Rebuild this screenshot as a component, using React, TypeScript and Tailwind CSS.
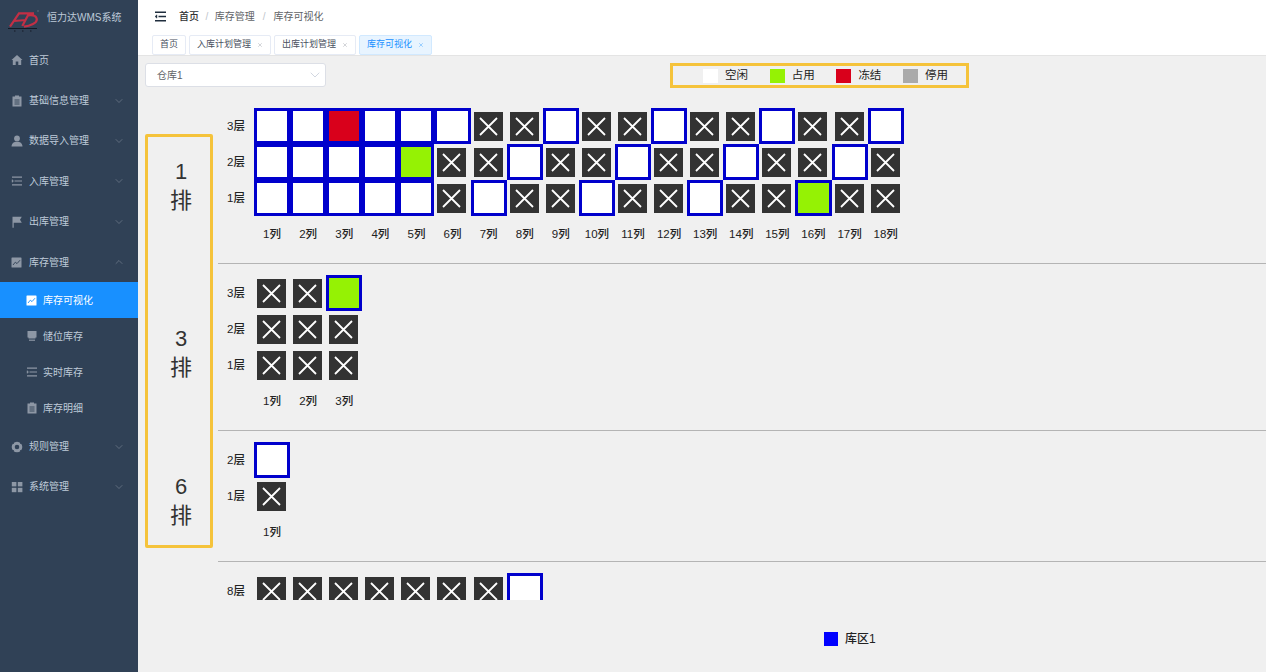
// App.tsx
import { ChevronDown, ChevronUp, X } from "lucide-react";
import type { ReactNode } from "react";

const ICON_COLOR = "#8d97a5";

function HomeIcon() {
    return (
        <svg width="12" height="12" viewBox="0 0 12 12" fill={ICON_COLOR}>
            <path d="M6 1 L11.5 6 L10.2 6 L10.2 11 L7.3 11 L7.3 7.5 L4.7 7.5 L4.7 11 L1.8 11 L1.8 6 L0.5 6 Z" />
        </svg>
    );
}

function ClipboardIcon() {
    return (
        <svg width="12" height="12" viewBox="0 0 12 12">
            <path d="M1.5 1.5 H4 V0.5 H8 V1.5 H10.5 V11.5 H1.5 Z" fill={ICON_COLOR} />
            <path d="M3.5 5 H8.5 M3.5 7 H8.5 M3.5 9 H8.5" stroke="#304156" strokeWidth="0.9" />
        </svg>
    );
}

function UserIcon() {
    return (
        <svg width="12" height="12" viewBox="0 0 12 12" fill={ICON_COLOR}>
            <circle cx="6" cy="3.4" r="2.9" />
            <path d="M0.5 11.5 C0.8 8 3 6.8 6 6.8 C9 6.8 11.2 8 11.5 11.5 Z" />
        </svg>
    );
}

function ListIcon() {
    return (
        <svg width="12" height="12" viewBox="0 0 12 12" fill="none" stroke={ICON_COLOR} strokeWidth="1.2">
            <path d="M1 2.2 H11 M3.5 6 H11 M1 9.8 H11" />
            <path d="M1 4.6 L2.6 6 L1 7.4 Z" fill={ICON_COLOR} strokeWidth="0.4" />
        </svg>
    );
}

function FlagIcon() {
    return (
        <svg width="12" height="12" viewBox="0 0 12 12" fill={ICON_COLOR}>
            <path d="M1.5 0.8 H10.8 L9 3.8 L10.8 6.8 H2.7 V11.8 H1.5 Z" />
        </svg>
    );
}

function ChartIcon({ color = ICON_COLOR, line = "#304156" }: { color?: string; line?: string }) {
    return (
        <svg width="11" height="11" viewBox="0 0 11 11">
            <rect x="0.5" y="0.5" width="10" height="10" rx="0.6" fill={color} />
            <path d="M2 8 L4.3 5.2 L6 6.6 L9 3.2" fill="none" stroke={line} strokeWidth="0.9" />
        </svg>
    );
}

function PrinterIcon() {
    return (
        <svg width="12" height="12" viewBox="0 0 12 12" fill={ICON_COLOR}>
            <path d="M1.5 1 H10.5 V7.5 H9.5 V8.5 H2.5 V7.5 H1.5 Z" />
            <rect x="3" y="9.6" width="6" height="1.2" />
        </svg>
    );
}

function GearIcon() {
    return (
        <svg width="12" height="12" viewBox="0 0 12 12" fill="none">
            <circle cx="6" cy="6" r="3.8" stroke={ICON_COLOR} strokeWidth="3" />
            <path d="M1.6 1.6 L2.8 2.8 M10.4 1.6 L9.2 2.8 M1.6 10.4 L2.8 9.2 M10.4 10.4 L9.2 9.2" stroke="#304156" strokeWidth="1" />
        </svg>
    );
}

function GridIcon() {
    return (
        <svg width="12" height="12" viewBox="0 0 12 12" fill={ICON_COLOR}>
            <rect x="0.8" y="1" width="4.6" height="4.4" />
            <rect x="6.8" y="1" width="4.6" height="4.4" />
            <rect x="0.8" y="6.8" width="4.6" height="4.4" />
            <rect x="6.8" y="6.8" width="4.6" height="4.4" />
        </svg>
    );
}

function Logo() {
    return (
        <svg width="32" height="24" viewBox="0 0 32 24" fill="none" className="shrink-0">
            <path d="M3 17.7 L12 4.3 H27 M7 12 L19 11 M15.3 17 L21 6.3 C31 5 32 12 26 15 C23 16.6 20 17.4 17 17.7" stroke="#c22f45" strokeWidth="2.2" />
            <path d="M1 19.5 H30" stroke="#141a26" strokeWidth="1" />
            <path d="M7 22 H8.5 M15 22 H16.5 M23 22 H24.5" stroke="#141a26" strokeWidth="1" />
            <path d="M31 1 V3" stroke="#6b7380" strokeWidth="0.8" />
        </svg>
    );
}

function MenuItem({ icon, label, open }: { icon: ReactNode; label: string; open?: boolean }) {
    return (
        <div className="h-[40.4px] flex items-center pl-[11px] pr-[13px] text-[10px] text-[#bfcbd9]">
            <span className="w-[18px] flex items-center shrink-0">{icon}</span>
            <span className="flex-1">{label}</span>
            {open === true && <ChevronUp size={12} strokeWidth={1} color="#8d97a5" />}
            {open === false && <ChevronDown size={12} strokeWidth={1} color="#8d97a5" />}
        </div>
    );
}

function SubItem({ icon, label, active }: { icon: ReactNode; label: string; active?: boolean }) {
    return (
        <div className={`h-9 flex items-center pl-[26px] text-[10px] ${active ? "bg-[#1890ff] text-white" : "text-[#bfcbd9]"}`}>
            <span className="w-[17px] flex items-center shrink-0">{icon}</span>
            <span>{label}</span>
        </div>
    );
}

function Sidebar() {
    return (
        <aside className="w-[138px] shrink-0 h-full bg-[#304156]">
            <div className="h-10 flex items-start pl-[7px] pt-[9px] gap-[8px]">
                <Logo />
                <span className="text-[10px] text-[#bfcbd9] mt-[1px] whitespace-nowrap">恒力达WMS系统</span>
            </div>
            <MenuItem icon={<HomeIcon />} label="首页" />
            <MenuItem icon={<ClipboardIcon />} label="基础信息管理" open={false} />
            <MenuItem icon={<UserIcon />} label="数据导入管理" open={false} />
            <MenuItem icon={<ListIcon />} label="入库管理" open={false} />
            <MenuItem icon={<FlagIcon />} label="出库管理" open={false} />
            <MenuItem icon={<ChartIcon />} label="库存管理" open={true} />
            <SubItem icon={<ChartIcon color="#ffffff" line="#1890ff" />} label="库存可视化" active />
            <SubItem icon={<PrinterIcon />} label="储位库存" />
            <SubItem icon={<ListIcon />} label="实时库存" />
            <SubItem icon={<ClipboardIcon />} label="库存明细" />
            <MenuItem icon={<GearIcon />} label="规则管理" open={false} />
            <MenuItem icon={<GridIcon />} label="系统管理" open={false} />
        </aside>
    );
}

function Tab({ label, active, closable = true }: { label: string; active?: boolean; closable?: boolean }) {
    return (
        <div
            className={`h-[20px] flex items-center px-[7px] gap-[6px] border rounded-[2px] text-[9px] whitespace-nowrap ${
                active ? "bg-[#e8f4ff] border-[#d1e9ff] text-[#1890ff]" : "bg-white border-[#e6ebf5] text-[#495060]"
            }`}
        >
            <span>{label}</span>
            {closable && <X size={6} strokeWidth={1.5} color={active ? "#1890ff" : "#8a8f99"} />}
        </div>
    );
}

function TopBar() {
    return (
        <header className="shrink-0 bg-white">
            <div className="h-[32px] flex items-center pl-[16px] text-[10px]">
                <svg width="13" height="11" viewBox="0 0 13 11" fill="none" stroke="#1f2d3d" strokeWidth="1.5">
                    <path d="M1 1.2 H12 M4.5 5.5 H12 M1 9.8 H12" />
                    <path d="M3 3.8 L1 5.5 L3 7.2 Z" fill="#1f2d3d" strokeWidth="0.4" />
                </svg>
                <span className="ml-[12px] font-medium text-[#303133]">首页</span>
                <span className="mx-[6.5px] text-[#c0c4cc]">/</span>
                <span className="text-[#606266]">库存管理</span>
                <span className="mx-[8px] text-[#c0c4cc]">/</span>
                <span className="text-[#606266]">库存可视化</span>
            </div>
            <div className="h-[24px] flex items-start pt-[3px] pl-[14px] gap-[3px] border-b border-[#e4e4e4]">
                <Tab label="首页" closable={false} />
                <Tab label="入库计划管理" />
                <Tab label="出库计划管理" />
                <Tab label="库存可视化" active />
            </div>
        </header>
    );
}

function LegendItem({ color, label }: { color: string; label: string }) {
    return (
        <div className="w-[66.7px] shrink-0 flex items-center gap-[7px]">
            <span className="w-[15px] h-[14px] shrink-0" style={{ backgroundColor: color }} />
            <span className="text-[11.5px] text-[#222]">{label}</span>
        </div>
    );
}

function Cell({ kind }: { kind: string }) {
    if (kind === "x") {
        return (
            <div className="w-[36.1px] h-9 pl-[3px] pt-[4px] shrink-0">
                <div className="w-[29px] h-[29px] bg-[#333333] flex items-center justify-center">
                    <svg width="19" height="19" viewBox="0 0 19 19" stroke="#ffffff" strokeWidth="1.8">
                        <path d="M1 1 L18 18 M18 1 L1 18" />
                    </svg>
                </div>
            </div>
        );
    }
    const fill = kind === "g" ? "bg-[#95f204]" : kind === "r" ? "bg-[#d9001b]" : "bg-white";
    return <div className={`w-[36.1px] h-9 shrink-0 border-[3px] border-[#0000cc] ${fill}`} />;
}

function Section({ rows, cols, divider = true }: { rows: [string, string][]; cols: number; divider?: boolean }) {
    return (
        <section className={divider ? "border-b border-[#b4b4b4] pb-[11px] mb-[11px]" : ""}>
            {rows.map(([label, cells]) => (
                <div key={label} className="flex h-9">
                    <div className="w-9 shrink-0 pt-[2px] flex items-center justify-center text-[11.5px] font-medium text-[#222]">{label}</div>
                    {cells.split("").map((c, i) => (
                        <Cell key={i} kind={c} />
                    ))}
                </div>
            ))}
            {cols > 0 && (
                <div className="flex h-9 pl-9">
                    {Array.from({ length: cols }, (_, i) => (
                        <div key={i} className="w-[36.1px] shrink-0 pt-[2px] flex items-center justify-center text-[11.5px] font-medium text-[#222]">
                            {i + 1}列
                        </div>
                    ))}
                </div>
            )}
        </section>
    );
}

function RowName({ n, className }: { n: number; className: string }) {
    return (
        <div className={`text-[22px] text-center text-[#333] pl-[4px] ${className}`}>
            <div className="leading-[27px]">{n}</div>
            <div className="leading-[28px] mt-[2px]">排</div>
        </div>
    );
}

export default function App() {
    return (
        <div
            className="w-[1266px] h-[672px] flex overflow-hidden bg-white"
            style={{ fontFamily: '"Liberation Sans", "Noto Sans CJK SC", sans-serif' }}
        >
            <Sidebar />
            <div className="flex-1 min-w-0 flex flex-col">
                <TopBar />
                <main className="flex-1 bg-[#f0f0f0] flex flex-col min-h-0">
                    <div className="flex pl-[7px] pt-[7px]">
                        <div className="w-[181px] h-[24px] bg-white border border-[#dcdfe6] rounded-[3px] flex items-center justify-between pl-[11px] pr-[2px] text-[10px] text-[#606266]">
                            <span>仓库1</span>
                            <ChevronDown size={16} strokeWidth={0.9} color="#b4bccc" />
                        </div>
                        <div className="ml-[344px] w-[299px] h-[25px] border-[3px] border-[#f5c33b] flex items-center pl-[30px]">
                            <LegendItem color="#ffffff" label="空闲" />
                            <LegendItem color="#95f204" label="占用" />
                            <LegendItem color="#d9001b" label="冻结" />
                            <LegendItem color="#aaaaaa" label="停用" />
                        </div>
                    </div>
                    <div className="flex pl-[7px] mt-[20px] gap-[5px]">
                        <div className="w-[68px] h-[414px] mt-[26px] border-[3px] border-[#f5c33b] rounded-[2px] shrink-0">
                            <RowName n={1} className="mt-[21px]" />
                            <RowName n={3} className="mt-[110px]" />
                            <RowName n={6} className="mt-[91px]" />
                        </div>
                        <div className="flex-1 min-w-0 h-[492px] overflow-hidden">
                            <Section
                                cols={18}
                                rows={[
                                    ["3层", "wwrwwwxxwxxwxxwxxw"],
                                    ["2层", "wwwwgxxwxxwxxwxxwx"],
                                    ["1层", "wwwwwxwxxwxxwxxgxx"],
                                ]}
                            />
                            <Section
                                cols={3}
                                rows={[
                                    ["3层", "xxg"],
                                    ["2层", "xxx"],
                                    ["1层", "xxx"],
                                ]}
                            />
                            <Section
                                cols={1}
                                rows={[
                                    ["2层", "w"],
                                    ["1层", "x"],
                                ]}
                            />
                            <Section divider={false} cols={0} rows={[["8层", "xxxxxxxw"]]} />
                        </div>
                    </div>
                    <div className="flex items-center pl-[686px] mt-[30px] gap-[7px]">
                        <span className="w-[14px] h-[14px] bg-[#0000ff]" />
                        <span className="text-[12px] font-medium text-[#222]">库区1</span>
                    </div>
                </main>
            </div>
        </div>
    );
}
